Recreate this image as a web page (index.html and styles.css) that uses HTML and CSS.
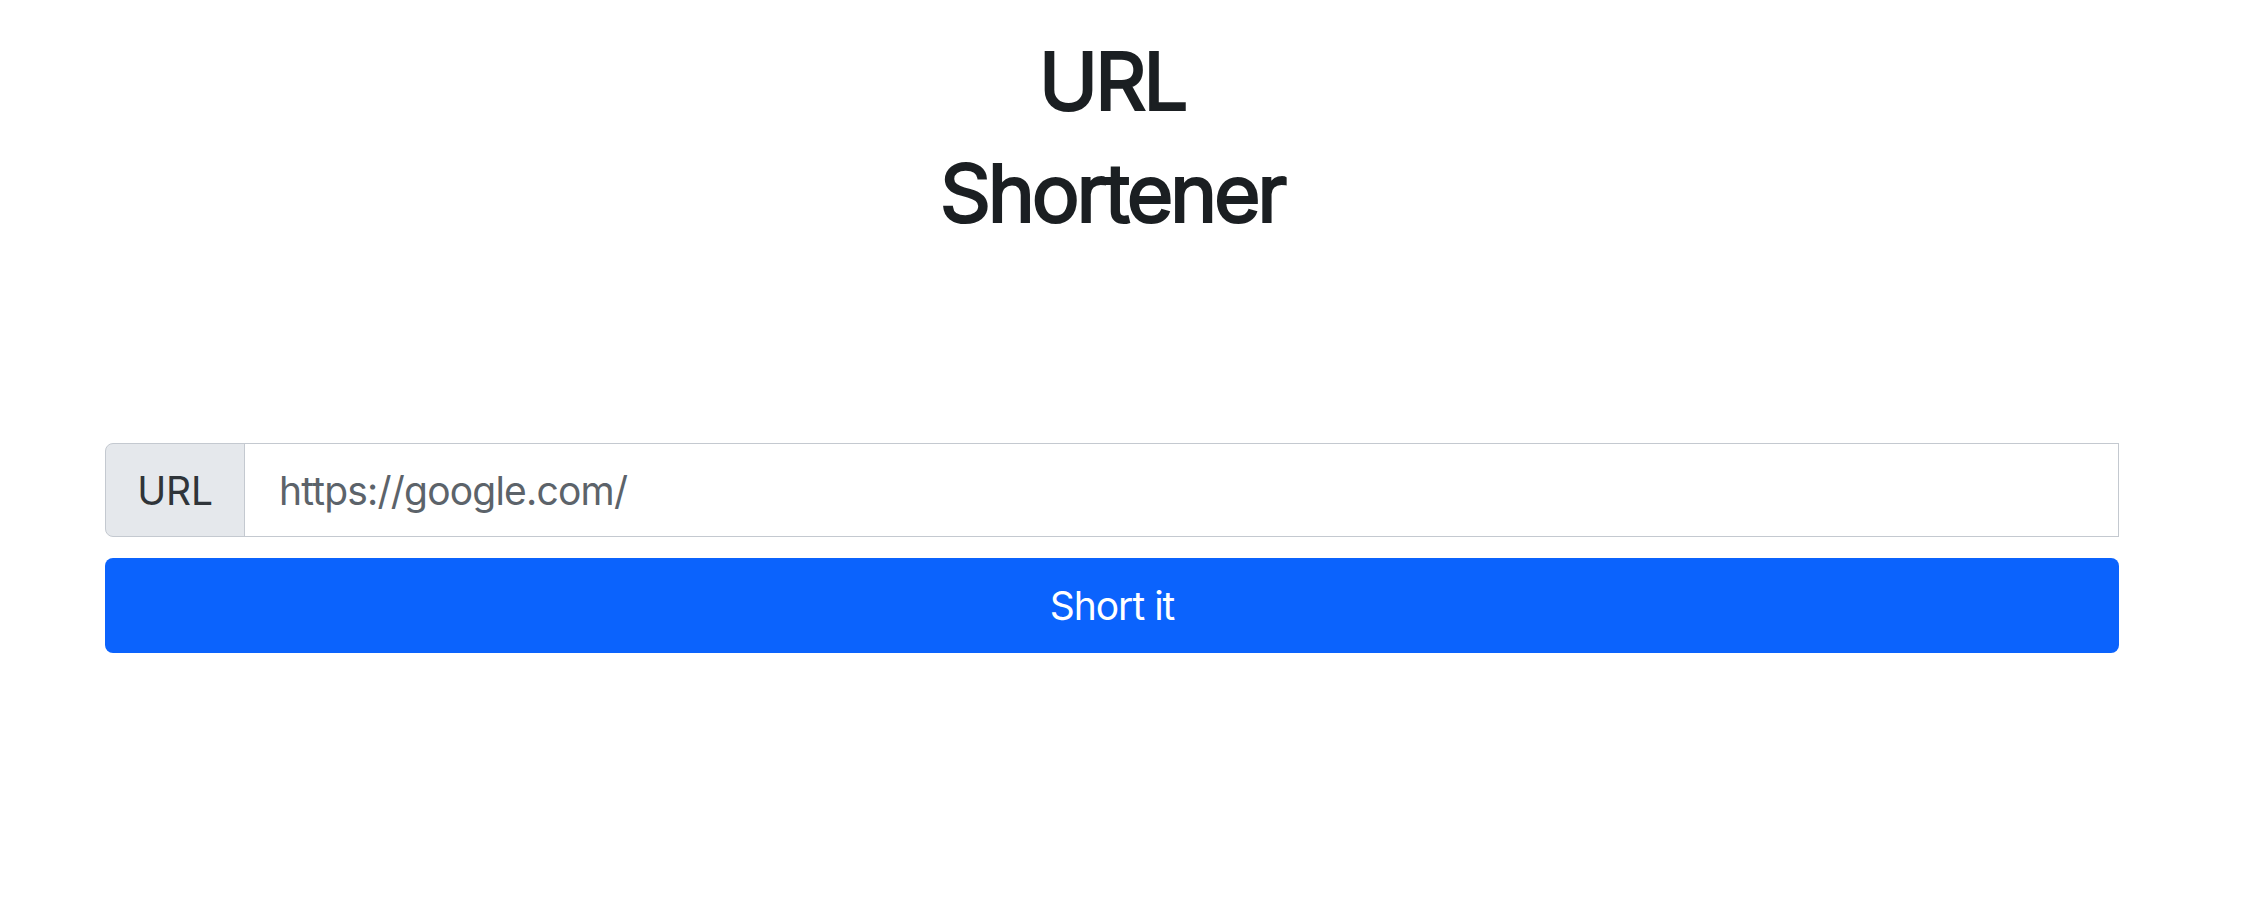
FILE: index.html
```html
<!DOCTYPE html>
<html lang="en">
<head>
<meta charset="utf-8">
<title>URL Shortener</title>
<link rel="stylesheet" href="styles.css">
</head>
<body>
<main class="container">
  <h1 class="title">URL Shortener</h1>
  <form class="form">
    <div class="input-group">
      <span class="addon">URL</span>
      <input class="field" type="text" placeholder="https://google.com/">
    </div>
    <button class="btn" type="button">Short it</button>
  </form>
</main>
</body>
</html>
```
FILE: styles.css
```css
html, body {
  margin: 0;
  padding: 0;
  background: #ffffff;
}
body {
  font-family: Inter, "Liberation Sans", sans-serif;
  color: #1b1f22;
}
.container {
  width: 2014px;
  margin-left: 105px;
  padding-top: 25px;
}
.title {
  margin: 0 auto;
  max-width: 420px;
  text-align: center;
  font-size: 80px;
  line-height: 112px;
  font-weight: 400;
  letter-spacing: -3.3px;
  -webkit-text-stroke: 2.2px #1b1f22;
  color: #1b1f22;
}
.form {
  margin-top: 194px;
  display: flex;
  flex-direction: column;
  gap: 21px;
}
.input-group {
  display: flex;
  height: 94px;
}
.addon {
  display: flex;
  align-items: center;
  justify-content: center;
  box-sizing: border-box;
  width: 140px;
  background: #e5e8ec;
  border: 1px solid #c4c9d0;
  border-radius: 8px 0 0 8px;
  font-size: 39px;
  letter-spacing: -0.3px;
  color: #2f3439;
}
.field {
  flex: 1;
  box-sizing: border-box;
  height: 94px;
  margin-left: -1px;
  border: 1px solid #c4c9d0;
  border-radius: 0;
  padding: 0 34px;
  font-family: Inter, "Liberation Sans", sans-serif;
  font-size: 39px;
  letter-spacing: -0.8px;
  color: #1b1f22;
  outline: none;
}
.field::placeholder {
  color: #5c636a;
  opacity: 1;
}
.btn {
  height: 95px;
  border: none;
  border-radius: 8px;
  background: #0b63fd;
  color: #ffffff;
  font-family: Inter, "Liberation Sans", sans-serif;
  font-size: 39px;
  letter-spacing: -1px;
  cursor: pointer;
}
```
